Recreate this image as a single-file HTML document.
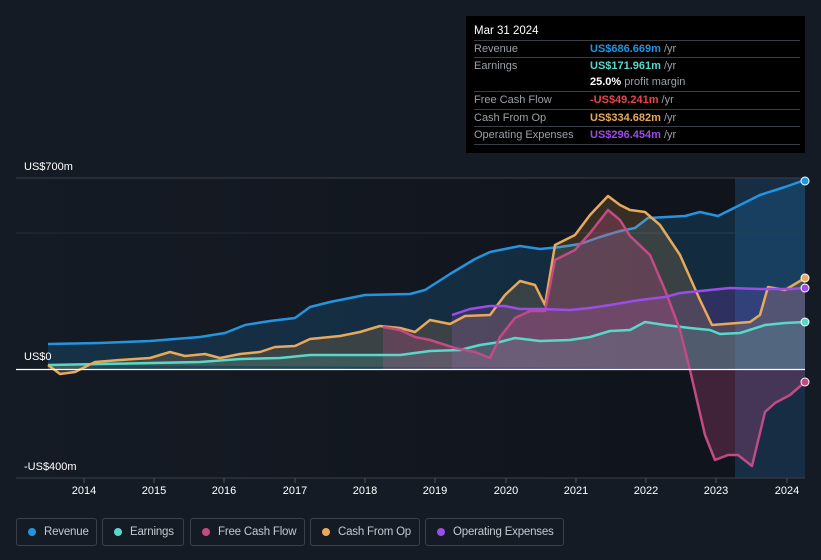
<!DOCTYPE html>
<html><head><meta charset="utf-8"><style>
body{margin:0;background:#151b25;width:821px;height:560px;overflow:hidden;font-family:"Liberation Sans",sans-serif;position:relative}
.tt{position:absolute;left:466px;top:16px;width:339px;height:137px;background:#000;color:#fff;font-size:11px}
.tt .h{position:absolute;left:8px;top:9px;font-size:11.5px}
.row{position:absolute;left:8px;width:326px;border-top:1px solid #3a3f47;height:17px;line-height:17px;color:#9aa0a8}
.row span{position:absolute;left:116px;font-weight:bold}
.row i{font-style:normal;color:#9aa0a8;font-weight:normal}
.lab{position:absolute;color:#fff;font-size:11px}
.ax{position:absolute;top:485px;color:#fff;font-size:11px;width:40px;text-align:center}
.lg{position:absolute;top:518px;height:28px;border:1px solid #3a404a;border-radius:3px;color:#c5c9cf;font-size:11.5px;line-height:26px;box-sizing:border-box;white-space:nowrap;letter-spacing:-0.2px}
.lg b{position:absolute;left:11px;top:9px;width:8px;height:8px;border-radius:50%}
.lg span{position:absolute;left:27px}
</style></head><body>
<svg width="821" height="560" style="position:absolute;left:0;top:0">
<defs><linearGradient id="bg" x1="0" x2="1"><stop offset="0" stop-color="#151b25"/><stop offset="0.9" stop-color="#0e1118"/></linearGradient></defs>
<rect x="16" y="178" width="720" height="300" fill="url(#bg)" opacity="0.7"/>
<rect x="735" y="178" width="70" height="300" fill="#17324c" opacity="0.8"/>
<line x1="16" y1="178" x2="805" y2="178" stroke="#3a404a"/>
<line x1="16" y1="233" x2="805" y2="233" stroke="#262c36"/>
<line x1="16" y1="478" x2="805" y2="478" stroke="#3a404a"/>
<g stroke="#4a505a"><line x1="84" y1="478" x2="84" y2="483"/><line x1="154" y1="478" x2="154" y2="483"/><line x1="224" y1="478" x2="224" y2="483"/><line x1="295" y1="478" x2="295" y2="483"/><line x1="365" y1="478" x2="365" y2="483"/><line x1="435" y1="478" x2="435" y2="483"/><line x1="506" y1="478" x2="506" y2="483"/><line x1="576" y1="478" x2="576" y2="483"/><line x1="646" y1="478" x2="646" y2="483"/><line x1="716" y1="478" x2="716" y2="483"/><line x1="787" y1="478" x2="787" y2="483"/></g>
<polygon fill="#2394df" opacity="0.18" points="48,369 48,344 100,343 150,341 200,337 225,333 245,325 270,321 295,318 310,307 330,302 365,295 410,294 425,290 450,274 475,259 490,252 520,246 540,249 560,247 580,244 600,237 620,231 635,228 648,218 685,216 700,212 718,216 740,205 760,195 785,187 805,180 805,369"/>
<polyline fill="none" stroke="#2394df" stroke-width="2.5" stroke-linejoin="round" points="48,344 100,343 150,341 200,337 225,333 245,325 270,321 295,318 310,307 330,302 365,295 410,294 425,290 450,274 475,259 490,252 520,246 540,249 560,247 580,244 600,237 620,231 635,228 648,218 685,216 700,212 718,216 740,205 760,195 785,187 805,180"/>
<polygon fill="#9c4ce8" opacity="0.2" points="452,369 452,315 470,309 490,306 505,306 520,309 540,309 570,310 590,308 610,305 640,300 665,297 680,293 700,291 730,288 760,289 790,289 805,288 805,369"/>
<polygon fill="#e8a95a" opacity="0.18" points="48,365 60,374 75,372 95,362 120,360 150,358 170,352 185,356 205,354 220,358 240,354 260,352 275,347 295,346 310,339 340,336 360,332 380,326 400,328 415,332 430,320 450,324 465,316 490,315 505,295 520,281 535,285 545,305 555,245 575,235 590,215 608,196 620,205 630,210 645,212 660,225 680,255 700,300 712,325 725,324 750,322 760,315 768,287 785,290 805,278 805,369"/>
<polygon fill="#c24b84" opacity="0.28" points="383,369 383,327 400,330 415,337 430,340 455,348 475,352 490,358 500,337 515,318 530,311 545,311 555,260 575,250 590,233 608,210 620,220 630,236 650,255 665,290 680,330 690,370 705,435 715,460 728,455 738,455 752,466 765,412 775,403 790,395 805,382 805,369"/>
<polygon fill="#58d8c8" opacity="0.15" points="48,369 48,365 100,364 200,362 240,359 280,358 310,355 360,355 400,355 430,351 460,350 480,345 500,342 515,338 540,341 570,340 590,337 610,331 630,330 645,322 665,325 690,328 710,330 720,334 740,333 765,325 785,323 805,322 805,369"/>
<polyline fill="none" stroke="#58d8c8" stroke-width="2.5" stroke-linejoin="round" points="48,365 100,364 200,362 240,359 280,358 310,355 360,355 400,355 430,351 460,350 480,345 500,342 515,338 540,341 570,340 590,337 610,331 630,330 645,322 665,325 690,328 710,330 720,334 740,333 765,325 785,323 805,322"/>
<polyline fill="none" stroke="#e8a95a" stroke-width="2.5" stroke-linejoin="round" points="48,365 60,374 75,372 95,362 120,360 150,358 170,352 185,356 205,354 220,358 240,354 260,352 275,347 295,346 310,339 340,336 360,332 380,326 400,328 415,332 430,320 450,324 465,316 490,315 505,295 520,281 535,285 545,305 555,245 575,235 590,215 608,196 620,205 630,210 645,212 660,225 680,255 700,300 712,325 725,324 750,322 760,315 768,287 785,290 805,278"/>
<polyline fill="none" stroke="#c24b84" stroke-width="2.5" stroke-linejoin="round" points="383,327 400,330 415,337 430,340 455,348 475,352 490,358 500,337 515,318 530,311 545,311 555,260 575,250 590,233 608,210 620,220 630,236 650,255 665,290 680,330 690,370 705,435 715,460 728,455 738,455 752,466 765,412 775,403 790,395 805,382"/>
<polyline fill="none" stroke="#9c4ce8" stroke-width="2.5" stroke-linejoin="round" points="452,315 470,309 490,306 505,306 520,309 540,309 570,310 590,308 610,305 640,300 665,297 680,293 700,291 730,288 760,289 790,289 805,288"/>
<line x1="16" y1="369.5" x2="805" y2="369.5" stroke="#fff" stroke-width="1.2"/>
<g stroke="#fff" stroke-width="1"><circle cx="805" cy="181" r="4" fill="#2394df"/><circle cx="805" cy="278" r="4" fill="#e8a95a"/><circle cx="805" cy="288" r="4" fill="#9c4ce8"/><circle cx="805" cy="322" r="4" fill="#58d8c8"/><circle cx="805" cy="382" r="4" fill="#c24b84"/></g>
</svg>
<div class="lab" style="left:24px;top:161px">US$700m</div>
<div class="lab" style="left:24px;top:351px">US$0</div>
<div class="lab" style="left:24px;top:461px">-US$400m</div>
<div class="ax" style="left:64px">2014</div><div class="ax" style="left:134px">2015</div><div class="ax" style="left:204px">2016</div><div class="ax" style="left:275px">2017</div><div class="ax" style="left:345px">2018</div><div class="ax" style="left:415px">2019</div><div class="ax" style="left:486px">2020</div><div class="ax" style="left:556px">2021</div><div class="ax" style="left:626px">2022</div><div class="ax" style="left:696px">2023</div><div class="ax" style="left:767px">2024</div>
<div class="tt">
<div class="h">Mar 31 2024</div>
<div class="row" style="top:24px">Revenue<span style="color:#2394df">US$686.669m <i>/yr</i></span></div>
<div class="row" style="top:41px">Earnings<span style="color:#58d8c8">US$171.961m <i>/yr</i></span></div>
<div class="row" style="top:58px;border-top:none"><span style="color:#fff">25.0% <i>profit margin</i></span></div>
<div class="row" style="top:75px">Free Cash Flow<span style="color:#e84545">-US$49.241m <i>/yr</i></span></div>
<div class="row" style="top:93px">Cash From Op<span style="color:#e8a95a">US$334.682m <i>/yr</i></span></div>
<div class="row" style="top:110px;border-bottom:1px solid #3a3f47">Operating Expenses<span style="color:#9c4ce8">US$296.454m <i>/yr</i></span></div>
</div>
<div class="lg" style="left:16px;width:81px"><b style="background:#2394df"></b><span>Revenue</span></div>
<div class="lg" style="left:102px;width:82px"><b style="background:#58d8c8"></b><span>Earnings</span></div>
<div class="lg" style="left:190px;width:115px"><b style="background:#c24b84"></b><span>Free Cash Flow</span></div>
<div class="lg" style="left:310px;width:110px"><b style="background:#e8a95a"></b><span>Cash From Op</span></div>
<div class="lg" style="left:425px;width:139px"><b style="background:#9c4ce8"></b><span>Operating Expenses</span></div>
</body></html>
